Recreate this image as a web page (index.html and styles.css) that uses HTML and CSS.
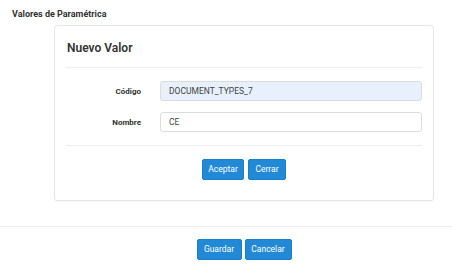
FILE: index.html
```html
<!DOCTYPE html>
<html>
<head>
<meta charset="utf-8">
<link rel="stylesheet" href="styles.css">
</head>
<body>
<div class="page">
  <div class="page-title">Valores de Paramétrica</div>
  <div class="column">
    <div class="card">
      <div class="card-title">Nuevo Valor</div>
      <div class="form">
        <div class="row">
          <label class="label">Código</label>
          <div class="input autofill">DOCUMENT_TYPES_7</div>
        </div>
        <div class="row">
          <label class="label">Nombre</label>
          <div class="input">CE</div>
        </div>
      </div>
      <div class="actions">
        <button class="btn btn-aceptar">Aceptar</button>
        <button class="btn btn-cerrar">Cerrar</button>
      </div>
    </div>
  </div>
  <div class="footer">
    <div class="column footer-actions">
      <button class="btn btn-guardar">Guardar</button>
      <button class="btn btn-cancelar">Cancelar</button>
    </div>
  </div>
</div>
</body>
</html>
```
FILE: styles.css
```css
html, body {
  margin: 0;
  padding: 0;
  background: #fff;
}
body {
  font-family: Roboto, "Liberation Sans", sans-serif;
  color: #333;
  width: 452px;
  height: 276px;
  overflow: hidden;
}
.page-title {
  font-size: 9px;
  font-weight: 700;
  line-height: 12px;
  padding: 8px 0 0 12px;
  height: 17px;
  color: #333;
}
.column {
  margin-left: 54px;
  width: 380px;
}
.card {
  box-sizing: border-box;
  height: 176px;
  border: 1px solid #e6e6e6;
  border-radius: 3px;
  box-shadow: 0 1px 1px rgba(0,0,0,0.03);
  padding: 0 11px;
}
.card-title {
  font-size: 12px;
  font-weight: 600;
  color: #333;
  line-height: 16px;
  padding: 14px 1px 0 1px;
  height: 27px;
  border-bottom: 1px solid #eeeeee;
}
.form {
  padding: 13px 0 0 0;
  height: 64px;
  border-bottom: 1px solid #eeeeee;
  display: flex;
  flex-direction: column;
  gap: 11px;
}
.row {
  display: flex;
  align-items: center;
  height: 20px;
}
.label {
  width: 75px;
  text-align: right;
  font-size: 8px;
  font-weight: 700;
  color: #333;
  margin-right: 19px;
}
.input {
  box-sizing: border-box;
  flex: 1;
  height: 20px;
  border: 1px solid #dcdcdc;
  border-radius: 3px;
  font-size: 8.5px;
  line-height: 18px;
  padding: 0 8px;
  color: #444;
  background: #fff;
}
.input.autofill {
  background: #e8f0fe;
}
.actions {
  display: flex;
  justify-content: center;
  gap: 4px;
  padding-top: 13px;
}
.btn {
  box-sizing: border-box;
  height: 21px;
  border: 1px solid #1a7fc9;
  border-radius: 2px;
  background: #2189d6;
  color: #fff;
  font-family: Roboto, "Liberation Sans", sans-serif;
  font-size: 8.5px;
  padding: 0;
  margin: 0;
  line-height: 19px;
}
.btn-aceptar { width: 42px; }
.btn-cerrar { width: 38px; }
.btn-guardar { width: 45px; }
.btn-cancelar { width: 47px; }
.footer {
  margin-top: 25px;
  border-top: 1px solid #eeeeee;
  padding-top: 12px;
}
.footer-actions {
  display: flex;
  justify-content: center;
  gap: 3px;
}
```
